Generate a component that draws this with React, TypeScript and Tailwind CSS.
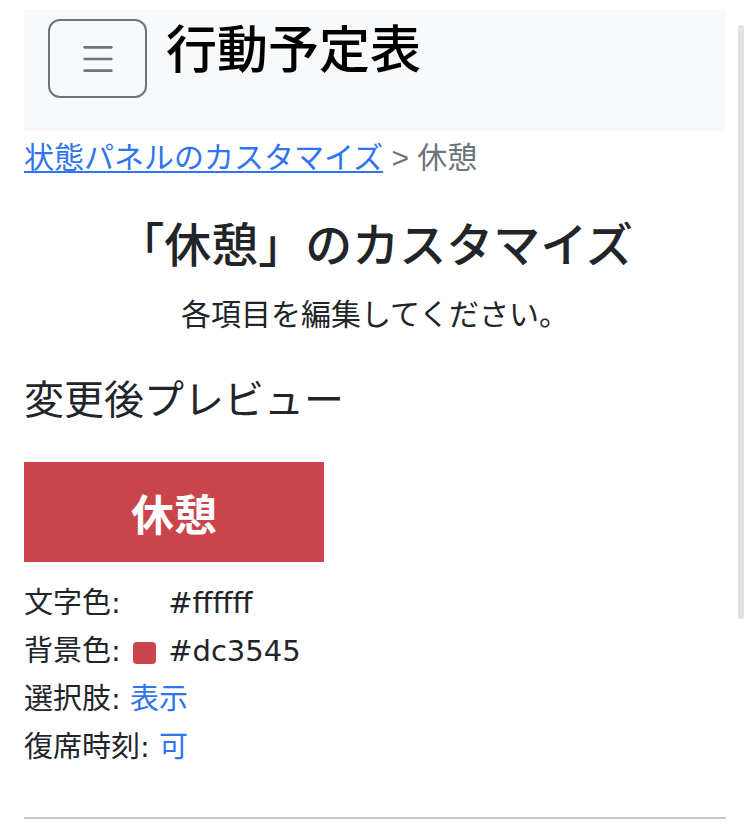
import { Menu } from 'lucide-react'

const jp = { fontFamily: '"Noto Sans CJK JP", "Liberation Sans", sans-serif' }
const mixed = { fontFamily: '"DejaVu Sans", "Noto Sans CJK JP", sans-serif' }
const latin = { fontFamily: '"Liberation Sans", "Noto Sans CJK JP", sans-serif' }

const Swatch = ({ color }: { color: string }) => (
  <span className="inline-block w-[23px] h-[22px] mx-[3px] rounded-[4px] align-[-3px]" style={{ backgroundColor: color }} />
)

const App = () => {
  return (
    <div className="relative min-h-[836px] bg-white text-[#212529]" style={jp}>
      <div className="mx-6 pt-[9px]">
        <header className="h-[122px] bg-[#f8f9fa] px-6 pt-[10px] flex items-start gap-[19px]">
          <button className="w-[99px] h-[79px] border-2 border-[#6c757d] rounded-[12px] flex items-center justify-center text-[#6c757d]">
            <Menu size={40} strokeWidth={1.6} />
          </button>
          <h1 className="text-[51px] leading-[70px] font-medium text-black mt-[-8px]">行動予定表</h1>
        </header>

        <nav className="text-[30px] leading-[48px] text-[#6c757d]">
          <a href="#" className="text-[#2f74f1] underline underline-offset-[3px] decoration-2">状態パネルのカスタマイズ</a>
          <span style={latin}> &gt; </span>
          <span>休憩</span>
        </nav>

        <h2 className="mt-[32px] text-center text-[47px] leading-[56px] font-medium">「休憩」のカスタマイズ</h2>
        <p className="mt-[18px] text-center text-[30px] leading-[48px]">各項目を編集してください。</p>

        <h3 className="mt-[37px] text-[40px] leading-[48px]">変更後プレビュー</h3>

        <div className="mt-[41px] w-[300px] h-[100px] bg-[#c9444b] flex items-center justify-center">
          <span className="text-white text-[43px] font-bold">休憩</span>
        </div>

        <div className="mt-[17px] text-[29px] leading-[48px]" style={mixed}>
          <div>
            文字色: <Swatch color="#ffffff" /> #ffffff
          </div>
          <div>
            背景色: <Swatch color="#c9444b" /> #dc3545
          </div>
          <div>
            選択肢: <span className="text-[#2f74f1]">表示</span>
          </div>
          <div>
            復席時刻: <span className="text-[#2f74f1]">可</span>
          </div>
        </div>

        <hr className="mt-[46px] border-0 h-[2px] bg-[#c6c6c6]" />
      </div>

      <div className="absolute left-[738px] top-[25px] w-[6px] h-[594px] rounded-full bg-[#e2e2e2]" />
    </div>
  )
}

export default App
